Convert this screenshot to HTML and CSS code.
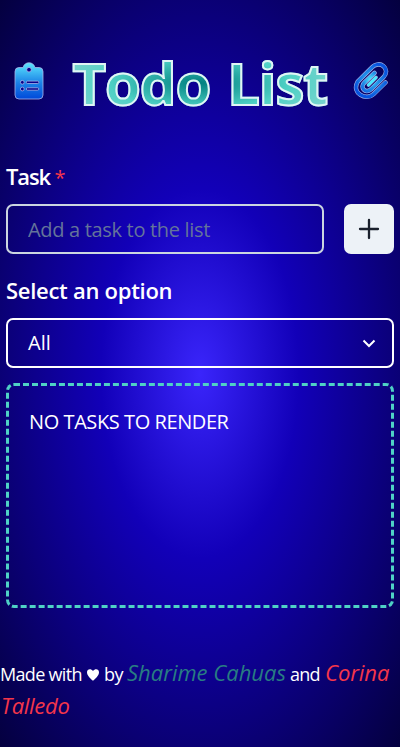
FILE: index.html
```html
<!DOCTYPE html>
<html lang="en">
<head>
<meta charset="utf-8">
<title>Todo List</title>
<link rel="stylesheet" href="styles.css">
</head>
<body>
<header class="header">
  <svg class="clipboard" viewBox="0 0 30 38" fill="none">
    <defs><linearGradient id="clip" x1="0" y1="0" x2="0" y2="1"><stop stop-color="#5ce7ff"/><stop offset=".55" stop-color="#1c83e6"/><stop offset="1" stop-color="#0049da"/></linearGradient></defs>
    <path d="M5 5.500h4C10 2.300 12 .8 15 .8s5 1.500 6 4.700h4q4 0 4 4v23.500q0 4-4 4H5q-4 0-4-4v-23.500q0-4 4-4Z" fill="url(#clip)" stroke="#a8b4e8" stroke-width=".8"/>
    <g fill="#09008a" stroke="#a8b4e8" stroke-width=".8"><circle cx="15" cy="7.700" r="2.300"/><circle cx="8.300" cy="20.300" r="1.900"/><circle cx="8.300" cy="27" r="1.900"/><rect x="12.300" y="19.100" width="12.500" height="2.400" rx="1.200"/><rect x="12.300" y="25.800" width="12.500" height="2.400" rx="1.200"/></g>
  </svg>
  <h1 class="title">Todo List</h1>
  <svg class="paperclip" viewBox="0 0 36 40" fill="none" stroke-linecap="round" stroke-linejoin="round">
    <defs><radialGradient id="paper" gradientUnits="userSpaceOnUse" cx="18" cy="19" r="17"><stop stop-color="#50f0ff"/><stop offset=".45" stop-color="#218fe8"/><stop offset="1" stop-color="#0752dd"/></radialGradient></defs>
    <path d="M32.500 21.500 20.500 33.200C13.500 40-2 32.500 4.700 20.700L18.500 6.800C26.500-2 38.500 8 30.300 16.300L18 28.300C12 33.500 6.500 26 11.500 21.500L21.500 12" stroke="#a0b2e8" stroke-width="4.500"/>
    <path d="M32.500 21.500 20.500 33.200C13.500 40-2 32.500 4.700 20.700L18.500 6.800C26.500-2 38.500 8 30.300 16.300L18 28.300C12 33.500 6.500 26 11.500 21.500L21.500 12" stroke="url(#paper)" stroke-width="3.300"/>
    <path d="M15.500 24 23 16.500" stroke="#a0b2e8" stroke-width="3.600"/>
    <path d="M15.500 24 23 16.500" stroke="#48eaff" stroke-width="2.600"/>
  </svg>
</header>
<main class="main">
  <label class="label" for="task"><span class="task-label">Task</span> <span class="required">*</span></label>
  <div class="entry">
    <input class="input" id="task" placeholder="Add a task to the list">
    <button class="add" aria-label="Add task"><svg width="22" height="22" viewBox="0 0 22 22" stroke="#1a202c" stroke-width="2.300" stroke-linecap="round"><path d="M11 2v18M2 11h18"/></svg></button>
  </div>
  <div class="label option-label">Select an option</div>
  <div class="select"><span>All</span><svg width="14" height="9" viewBox="0 0 14 9" fill="none" stroke="#fff" stroke-width="2"><path d="m1.500 1.500 5.500 5.500 5.500-5.500"/></svg></div>
  <section class="tasks">NO TASKS TO RENDER</section>
</main>
<footer class="footer">
  <div class="credit"><span class="made">Made with</span><svg class="heart" width="12" height="12" viewBox="0 0 12 12" fill="#fff"><path d="M6 11.800C3.500 9.500 0 6.500 0 3.200 0-.2 4-.8 6 2 8-.8 12-.2 12 3.200c0 3.300-3.500 6.300-6 8.600Z"/></svg><span class="by">by</span><em class="sharime">Sharime Cahuas</em><span class="and">and</span><em class="corina">Corina</em></div>
  <div class="credit"><em class="corina talledo">Talledo</em></div>
</footer>
</body>
</html>
```
FILE: styles.css
```css
* { box-sizing: border-box; }
body {
  margin: 0;
  height: 747px;
  overflow: hidden;
  color: #fff;
  font: 20px/30px "Open Sans", "Noto Sans", sans-serif;
  background: radial-gradient(ellipse at center, #3a25fb 0%, #1200b8 35%, #04003f 100%);
}
.header { height: 161px; padding: 0 11px 0 14px; display: flex; align-items: center; justify-content: space-between; }
.clipboard { width: 30px; height: 38px; }
.paperclip { width: 36px; height: 40px; }
.title {
  width: 256px;
  margin: 4px 0 0;
  padding-left: 2px;
  font-size: 58px;
  line-height: 72px;
  font-weight: 700;
  letter-spacing: -1.1px;
  word-spacing: 3px;
  white-space: nowrap;
  color: transparent;
  background: radial-gradient(ellipse at center, #008080 0%, #4fd1c5 50%, #94d4d4 100%);
  -webkit-background-clip: text;
  background-clip: text;
  -webkit-text-stroke: 2px #e0f5f5;
}
.main { padding: 0 6px; }
.label { display: block; height: 32px; font-size: 22px; line-height: 30px; font-weight: 600; letter-spacing: -.28px; }
.task-label { letter-spacing: -1.1px; }
.required { color: #f5364a; font-weight: 400; font-size: 20px; margin-left: -1px; }
.entry { display: flex; gap: 20px; margin-top: 11px; }
.input { width: 318px; height: 50px; padding: 0 20px; border: 2px solid #cbd5e0; border-radius: 7px; background: transparent; color: #fff; font: inherit; letter-spacing: -.32px; outline: none; }
.input::placeholder { color: #64749a; opacity: 1; }
.add { width: 50px; height: 50px; padding: 0; border: 0; border-radius: 7px; background: #edf2f7; display: grid; place-items: center; }
.option-label { margin-top: 21px; }
.select { height: 50px; margin-top: 11px; padding: 0 16px 0 20px; border: 2px solid #fff; border-radius: 7px; display: flex; align-items: center; justify-content: space-between; }
.tasks { height: 225px; margin-top: 15px; padding: 21px 20px; border: 3px dashed #4fd1c5; border-radius: 8px; letter-spacing: -.42px; }
.footer { margin-top: 49px; }
.credit { height: 33px; display: flex; align-items: baseline; line-height: 31px; font-size: 18px; white-space: nowrap; }
.made { width: 87px; letter-spacing: -.68px; }
.heart { width: 12px; height: 12px; margin-right: 5px; }
.by { width: 23px; letter-spacing: -.4px; }
.sharime { width: 163px; color: #287d82; font-size: 22px; }
.and { width: 35px; letter-spacing: -.8px; }
.corina { color: #f5364a; font-size: 22px; letter-spacing: -.05px; }
.talledo { margin-left: 1px; letter-spacing: -.3px; }
```
